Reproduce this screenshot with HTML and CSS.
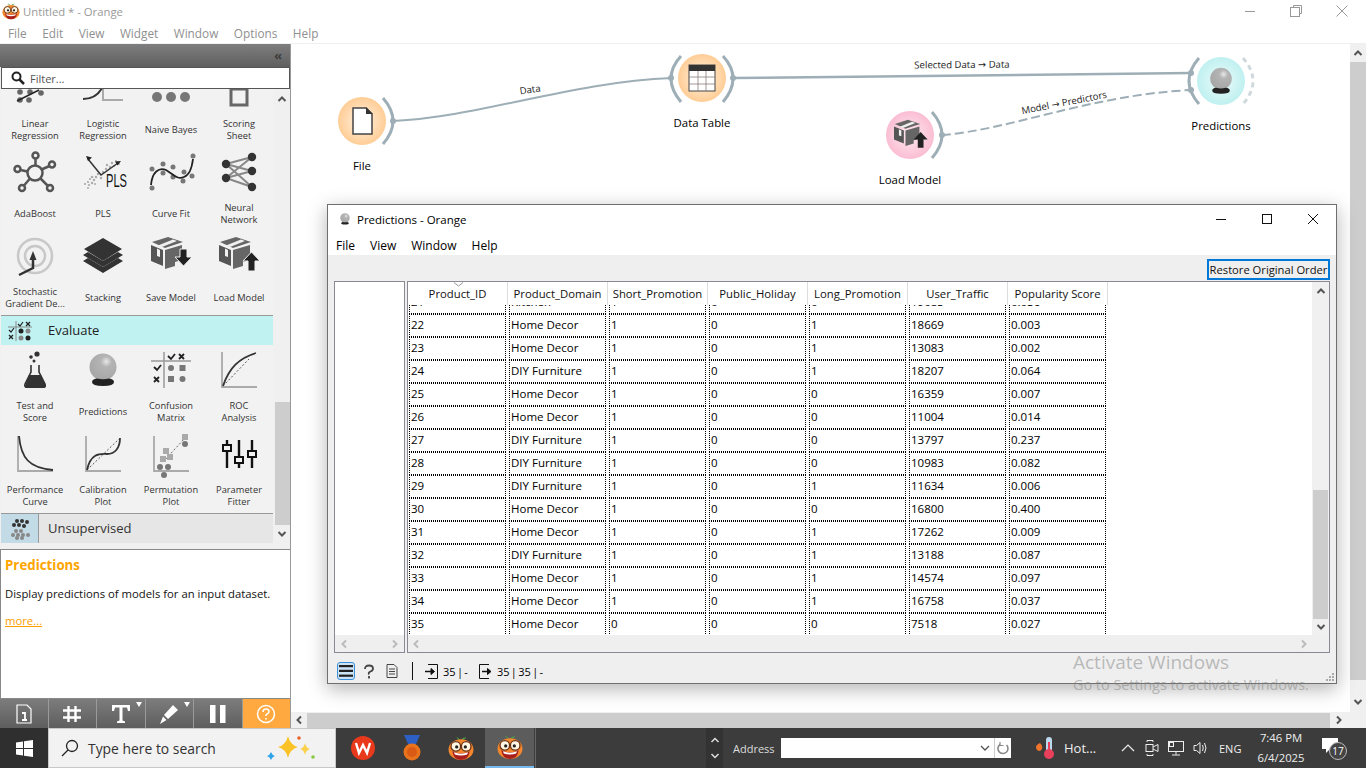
FILE: index.html
```html
<!DOCTYPE html>
<html lang="en">
<head>
<meta charset="utf-8">
<title>Untitled * - Orange</title>
<link rel="stylesheet" href="styles.css">
</head>
<body>
<svg class="defs" width="0" height="0" aria-hidden="true">
  <defs>
    <radialGradient id="gOrange"><stop offset="0" stop-color="#fff3e2"/><stop offset="1" stop-color="#ffcd96"/></radialGradient>
    <radialGradient id="gPink"><stop offset="0" stop-color="#fdeaf0"/><stop offset="1" stop-color="#fbbdd3"/></radialGradient>
    <radialGradient id="gCyan"><stop offset="0" stop-color="#eefbfb"/><stop offset="1" stop-color="#bff0f0"/></radialGradient>
    <radialGradient id="gBall" cx=".62" cy=".3" r=".8"><stop offset="0" stop-color="#e8e8e8"/><stop offset=".25" stop-color="#b4b4b4"/><stop offset="1" stop-color="#a4a4a4"/></radialGradient>
    <symbol id="chevU" viewBox="0 0 10 8"><path d="M1.5 6 5 2.5 8.5 6" fill="none" stroke="#555" stroke-width="2"/></symbol>
    <symbol id="chevD" viewBox="0 0 10 8"><path d="M1.5 2 5 5.5 8.5 2" fill="none" stroke="#555" stroke-width="2"/></symbol>
    <symbol id="chevL" viewBox="0 0 8 10"><path d="M6 1.5 2.5 5 6 8.5" fill="none" stroke="#bbb" stroke-width="2"/></symbol>
    <symbol id="chevR" viewBox="0 0 8 10"><path d="M2 1.5 5.5 5 2 8.5" fill="none" stroke="#bbb" stroke-width="2"/></symbol>
    <symbol id="ball" viewBox="0 0 40 40">
      <circle cx="20" cy="17" r="13.5" fill="url(#gBall)"/>
      <path d="M9 32q0-3 5-3.500q6 1.500 12 0q5 .5 5 3.500q0 4-11 4t-11-4z" fill="#222"/>
    </symbol>
    <symbol id="pkg" viewBox="0 0 40 40">
      <path d="M0 9 12 14V30L0 25z" fill="#555"/>
      <path d="M14 14 31 9V24L24 26V30L14 33z" fill="#666"/>
      <path d="M1 6 17 1 32 6 14 12z" fill="#666"/>
      <path d="M7 9.500 22 3.500 26 5 11 11z" fill="#f0f0f0"/>
      <path d="M6 12.500 9 14V21L6 20z" fill="#f0f0f0"/>
    </symbol>
    <symbol id="mascot" viewBox="0 0 24 24">
      <path d="M11 5C10 2.500 9 2 7.500 2.500 9 3 10 4 10.500 5zM12 5c1-2 3-3 5-2.500-1 .5-3 1.500-4 2.800z" fill="#4aa84a"/>
      <ellipse cx="12" cy="13.500" rx="11.500" ry="9.500" fill="#f4872e"/>
      <path d="M4 15q8 4 16 0q-1 8-8 8t-8-8z" fill="#a81f1c"/>
      <path d="M5.500 16q6.500 2.500 13 0l-.8 2q-5.700 2-11.400 0z" fill="#fff"/>
      <circle cx="7.200" cy="10.500" r="4.400" fill="#fff6e4" stroke="#6b3314" stroke-width="1.200"/>
      <circle cx="16.800" cy="10.500" r="4.400" fill="#fff6e4" stroke="#6b3314" stroke-width="1.200"/>
      <circle cx="8" cy="11" r="1.500" fill="#222"/><circle cx="16" cy="11" r="1.500" fill="#222"/>
    </symbol>
  </defs>
</svg>

<div class="app">
  <header class="titlebar">
    <svg class="title-logo" width="18" height="18"><use href="#mascot"/></svg>
    <span class="title-text">Untitled * - Orange</span>
    <div class="title-controls">
      <span class="wc"><svg width="12" height="12" viewBox="0 0 12 12"><path d="M1 6.500h10" stroke="#999"/></svg></span>
      <span class="wc"><svg width="12" height="12" viewBox="0 0 12 12" fill="none" stroke="#999"><path d="M3.500 2.500v-2h8v8h-2"/><rect x=".5" y="2.500" width="9" height="9"/></svg></span>
      <span class="wc"><svg width="12" height="12" viewBox="0 0 12 12"><path d="M.5.500l11 11m0-11l-11 11" stroke="#999"/></svg></span>
    </div>
  </header>
  <nav class="menubar">
    <span>File</span><span>Edit</span><span>View</span><span>Widget</span><span>Window</span><span>Options</span><span>Help</span>
  </nav>

  <main class="main">
    <aside class="sidebar">
      <div class="dock-head"><span class="dock-collapse">‹‹</span></div>
      <div class="filter">
        <svg width="14" height="14" viewBox="0 0 14 14" fill="none" stroke="#222" stroke-width="2"><circle cx="5.500" cy="5.500" r="4"/><path d="M8.500 8.500l4.500 4.500" stroke-width="2.500"/></svg>
        <span>Filter...</span>
      </div>
      <div class="toolbox">
        <div class="tool-list">
          <div class="tool-grid tool-grid-first">
            <div class="tool"><svg class="ti" viewBox="0 0 40 40"><g fill="#666"><circle cx="5" cy="32" r="2.800"/><circle cx="14" cy="32" r="2.800"/><circle cx="26" cy="25" r="2.800"/><circle cx="5" cy="24" r="2.800"/><circle cx="15" cy="24" r="2.800"/></g><path d="M2 33 24 22" stroke="#222" stroke-width="1.500"/></svg><span class="tl">Linear<br>Regression</span></div>
            <div class="tool"><svg class="ti" viewBox="0 0 40 40"><path d="M20 4V32H40" fill="none" stroke="#aaa" stroke-width="2"/><path d="M0 31Q13 31 19 20" fill="none" stroke="#333" stroke-width="2"/></svg><span class="tl">Logistic<br>Regression</span></div>
            <div class="tool"><svg class="ti" viewBox="0 0 40 40"><g fill="#777"><circle cx="6" cy="29" r="5"/><circle cx="20" cy="29" r="5"/><circle cx="34" cy="29" r="5"/></g></svg><span class="tl">Naive Bayes</span></div>
            <div class="tool"><svg class="ti" viewBox="0 0 40 40"><rect x="12" y="21" width="16" height="16" fill="none" stroke="#666" stroke-width="3"/></svg><span class="tl">Scoring<br>Sheet</span></div>

            <div class="tool"><svg class="ti" viewBox="0 0 40 40" fill="none" stroke="#555" stroke-width="2.500"><circle cx="20" cy="21" r="7.500"/><circle cx="20.500" cy="3.500" r="3"/><circle cx="2.500" cy="17" r="3"/><circle cx="38" cy="12.500" r="3" transform="translate(-1)"/><circle cx="7" cy="36" r="3"/><circle cx="35" cy="36" r="3"/><path d="M20.500 6.500v7M5.500 18l7 1.500M34.500 14l-8 3.500M9 33.500l6-7M32.500 33.500l-7-7"/></svg><span class="tl">AdaBoost</span></div>
            <div class="tool"><svg class="ti" viewBox="0 0 40 40"><g fill="#aaa"><circle cx="2" cy="32" r="1.100"/><circle cx="5" cy="30" r="1.100"/><circle cx="7" cy="27" r="1.100"/><circle cx="6" cy="33" r="1.100"/><circle cx="9" cy="31" r="1.200"/><circle cx="11" cy="28" r="1.200"/><circle cx="9" cy="25" r="1.200"/><circle cx="13" cy="25" r="1.200"/><circle cx="15" cy="22" r="1.200"/><circle cx="12" cy="32" r="1"/><circle cx="5" cy="36" r="1"/><circle cx="18" cy="26" r="1.200"/><circle cx="20" cy="20" r="1.200"/><circle cx="23" cy="17" r="1.200"/><circle cx="24" cy="13" r="1.200"/><circle cx="27" cy="15" r="1.200"/><circle cx="29" cy="11" r="1.200"/><circle cx="33" cy="9" r="1"/><circle cx="31" cy="14" r="1"/><circle cx="36" cy="12" r="1"/></g><path d="M5 7 18 23 35 11" fill="none" stroke="#333" stroke-width="1.500"/><path d="M3 4l6 1.500-4 3.500zM38 9l-6 .500 2.500 4z" fill="#222"/><text class="pls" x="23" y="35" textLength="21" lengthAdjust="spacingAndGlyphs">PLS</text></svg><span class="tl">PLS</span></div>
            <div class="tool"><svg class="ti" viewBox="0 0 40 40"><g fill="#777"><circle cx="1" cy="36" r="2.500"/><circle cx="1" cy="17" r="2.500"/><circle cx="12" cy="12" r="2.500"/><circle cx="12" cy="21" r="2.500"/><circle cx="22" cy="15" r="2.500"/><circle cx="22" cy="25" r="2.500"/><circle cx="32" cy="29" r="2.500"/><circle cx="33" cy="20" r="2.500"/><circle cx="41" cy="24" r="2.500"/><circle cx="42" cy="4" r="2.500"/></g><path d="M0 33C1 20 8 15 15 18 22 22 26 28 33 25 39 23 41 15 42 7" fill="none" stroke="#222" stroke-width="1.800"/></svg><span class="tl">Curve Fit</span></div>
            <div class="tool"><svg class="ti" viewBox="0 0 40 40"><path d="M7 12 33 5M7 12 33 19M7 12 33 35M7 26 33 5M7 26 33 19M7 26 33 35" stroke="#888" stroke-width="2"/><g fill="#333"><circle cx="7" cy="12" r="4.200"/><circle cx="7" cy="26" r="4.200"/><circle cx="33" cy="5" r="4.200"/><circle cx="33" cy="19" r="4.200"/><circle cx="33" cy="35" r="4.200"/></g></svg><span class="tl">Neural<br>Network</span></div>

            <div class="tool"><svg class="ti" viewBox="0 0 40 40"><circle cx="20" cy="20" r="17" fill="none" stroke="#c8c8c8" stroke-width="2.500"/><circle cx="20" cy="20" r="10" fill="none" stroke="#c8c8c8" stroke-width="2.500"/><path d="M4 39 18 32V24" fill="none" stroke="#333" stroke-width="2.500"/><path d="M18 15l-3.500 9h7z" fill="#333"/></svg><span class="tl">Stochastic<br>Gradient De...</span></div>
            <div class="tool"><svg class="ti" viewBox="0 0 40 40"><path d="M0 25 20 37 40 25 35 22 20 31 5 22z" fill="#333"/><path d="M0 19 20 31 40 19 35 16 20 25 5 16z" fill="#333"/><path d="M20 2 39 13 20 25 1 13z" fill="#333"/></svg><span class="tl">Stacking</span></div>
            <div class="tool"><svg class="ti" viewBox="0 0 40 40"><use href="#pkg" width="40" height="40"/><path d="M29 13h7v8h5l-8.500 9-8.500-9h5z" fill="#222" stroke="#f0f0f0"/></svg><span class="tl">Save Model</span></div>
            <div class="tool"><svg class="ti" viewBox="0 0 40 40"><use href="#pkg" width="40" height="40"/><path d="M29 35v-10h-5l8.500-9 8.500 9h-5v10z" fill="#222" stroke="#f0f0f0"/></svg><span class="tl">Load Model</span></div>
          </div>

          <div class="cat cat-open">
            <span class="cat-icon">
              <svg width="24" height="22" viewBox="0 0 24 22"><path d="M8 1V21M0 7H24" stroke="#888"/><path d="M10 4l2 2 3-4M1 10l2 2 3-4" fill="none" stroke="#222" stroke-width="1.200"/><path d="M18 2l4 4m0-4l-4 4M1 15l4 4m0-4l-4 4" stroke="#222" stroke-width="1.300"/><circle cx="13" cy="11" r="2.500" fill="#222"/><circle cx="20" cy="11" r="2.500" fill="#888"/><circle cx="13" cy="18" r="2.500" fill="#888"/><circle cx="20" cy="18" r="2.500" fill="#222"/></svg>
            </span>
            <span class="cat-name">Evaluate</span>
          </div>

          <div class="tool-grid">
            <div class="tool"><svg class="ti" viewBox="0 0 40 40"><circle cx="22" cy="4" r="2.600" fill="#333"/><circle cx="16" cy="7" r="1.800" fill="#333"/><circle cx="19" cy="11" r="1.500" fill="#333"/><path d="M16 15v7L10 34q-1 3 2 3H28q3 0 2-3L24 22V15" fill="none" stroke="#333" stroke-width="1.600"/><path d="M14 25H26L31 36q0 2-3 2H12q-3 0-2-2z" fill="#333"/></svg><span class="tl">Test and<br>Score</span></div>
            <div class="tool"><svg class="ti"><use href="#ball"/></svg><span class="tl">Predictions</span></div>
            <div class="tool"><svg class="ti" viewBox="0 0 40 40"><path d="M13 2V38M0 11H40" stroke="#999" stroke-width="1.500"/><path d="M17 6l3 3 4-5M3 17l3 3 4-5" fill="none" stroke="#222" stroke-width="1.800"/><path d="M28 4l5 5m0-5l-5 5M3 27l5 5m0-5l-5 5" stroke="#222" stroke-width="1.800"/><circle cx="20" cy="18" r="3" fill="#777"/><rect x="28.500" y="15" width="6" height="6" fill="#777"/><rect x="17" y="26" width="6" height="6" fill="#777"/><circle cx="31.500" cy="29" r="3" fill="#777"/></svg><span class="tl">Confusion<br>Matrix</span></div>
            <div class="tool"><svg class="ti" viewBox="0 0 40 40"><path d="M3 2V37H38" fill="none" stroke="#aaa" stroke-width="1.800"/><path d="M4 36 30 9" stroke="#555" stroke-dasharray="2 2"/><path d="M4 36C10 18 20 8 37 3" fill="none" stroke="#333" stroke-width="1.800"/></svg><span class="tl">ROC<br>Analysis</span></div>

            <div class="tool"><svg class="ti" viewBox="0 0 40 40"><path d="M3 2V37H38" fill="none" stroke="#aaa" stroke-width="1.800"/><path d="M4 2C6 24 14 34 38 36" fill="none" stroke="#333" stroke-width="1.800"/></svg><span class="tl">Performance<br>Curve</span></div>
            <div class="tool"><svg class="ti" viewBox="0 0 40 40"><path d="M3 2V37H38" fill="none" stroke="#aaa" stroke-width="1.800"/><path d="M4 36 36 5" stroke="#555" stroke-dasharray="2 2"/><path d="M4 36C8 18 18 20 24 20 32 20 37 14 37 4" fill="none" stroke="#333" stroke-width="1.800"/></svg><span class="tl">Calibration<br>Plot</span></div>
            <div class="tool"><svg class="ti" viewBox="0 0 40 40"><path d="M3 2V37H38" fill="none" stroke="#aaa" stroke-width="1.800"/><path d="M12 28 34 4" stroke="#666" stroke-dasharray="2 2"/><g fill="#aaa"><rect x="9" y="22" width="6" height="6"/><rect x="12" y="14" width="6" height="6"/><rect x="16" y="20" width="6" height="6"/><rect x="31" y="0" width="6" height="6"/></g><g fill="#777"><circle cx="9" cy="33" r="3"/><circle cx="17" cy="33" r="3"/><circle cx="13" cy="41" r="3"/><circle cx="34" cy="10" r="3"/></g></svg><span class="tl">Permutation<br>Plot</span></div>
            <div class="tool"><svg class="ti" viewBox="0 0 40 40" stroke="#111"><path d="M8 6V34M20 6V34M33 6V34" stroke-width="2.400"/><g fill="#f2f2f2" stroke-width="2"><rect x="4" y="11" width="8" height="6"/><rect x="16" y="23" width="8" height="6"/><rect x="29" y="17" width="8" height="6"/></g></svg><span class="tl">Parameter<br>Fitter</span></div>
          </div>

          <div class="cat cat-closed">
            <span class="cat-icon">
              <svg width="22" height="22" viewBox="0 0 22 22"><g fill="#333"><circle cx="8" cy="3" r="2"/><circle cx="13" cy="3" r="2"/><circle cx="18" cy="4" r="2"/><circle cx="5" cy="7" r="2"/><circle cx="10" cy="7" r="2"/><circle cx="15" cy="8" r="2"/></g><g fill="#888"><circle cx="7" cy="13" r="2"/><circle cx="12" cy="13" r="2"/><circle cx="4" cy="17" r="2"/><circle cx="9" cy="17" r="2"/><circle cx="14" cy="17" r="2"/><circle cx="19" cy="17" r="2"/><circle cx="8" cy="20" r="2"/><circle cx="13" cy="20" r="2"/></g></svg>
            </span>
            <span class="cat-name">Unsupervised</span>
          </div>
        </div>
        <div class="side-scroll">
          <svg class="chev chev-top" width="10" height="8"><use href="#chevU"/></svg>
          <div class="side-thumb"></div>
          <svg class="chev" width="10" height="8"><use href="#chevD"/></svg>
        </div>
      </div>

      <section class="info">
        <h2>Predictions</h2>
        <p>Display predictions of models for an input dataset.</p>
        <a href="#">more...</a>
      </section>

      <div class="dock-tools">
        <span class="dt"><svg width="18" height="20" viewBox="0 0 18 20" fill="none" stroke="#fff" stroke-width="1.200"><path d="M2 1H12L16 5V19H2z"/><path d="M9 6v.01" stroke-width="2.400"/><path d="M7 9H10V16M7 16H12" stroke-width="1.800"/></svg></span>
        <span class="dt"><svg width="20" height="18" viewBox="0 0 20 18" fill="none" stroke="#fff" stroke-width="2.400"><path d="M6.500 1V17M13.500 1V17M1 5.500H19M1 12.500H19"/></svg></span>
        <span class="dt dt-menu"><svg width="20" height="20" viewBox="0 0 20 20" fill="#fff"><path d="M1 1H19V7H17L16 3.500H11.500V16.500L14 17.500V19H6V17.500L8.500 16.500V3.500H4L3 7H1z"/></svg></span>
        <span class="dt dt-menu"><svg width="20" height="20" viewBox="0 0 20 20" fill="#fff"><path d="M13 1 18 6 8 15 4 11zM3 12.500 6.500 16 0 20z"/></svg></span>
        <span class="dt"><svg width="16" height="18" viewBox="0 0 16 18" fill="#fff"><rect x="0" y="0" width="5.500" height="18"/><rect x="10" y="0" width="5.500" height="18"/></svg></span>
        <span class="dt dt-help"><svg width="20" height="20" viewBox="0 0 20 20" fill="none" stroke="#fff" stroke-width="1.500"><circle cx="10" cy="10" r="8.500"/><path d="M7 8q0-3 3-3t3 2.500q0 1.500-2 2.500-1 .5-1 2"/><path d="M10 14v1.500"/></svg></span>
      </div>
    </aside>

    <section class="workspace">
      <div class="canvas-row">
        <div class="canvas">
          <svg class="flow" viewBox="291 44 1059 668" width="1059" height="668">
            <g fill="none" stroke="#9eaeb6">
              <path d="M393 121C480 117 570 82 672 78" stroke-width="2"/>
              <path d="M733 78 1191 73" stroke-width="2.500"/>
              <path d="M942 135C1010 130 1090 95 1191 90" stroke-width="2" stroke-dasharray="9 4"/>
              <path d="M383 98Q403 121 383 144" stroke-width="3"/>
              <path d="M681 56Q661 78 681 102" stroke-width="3"/>
              <path d="M723 56Q743 78 723 102" stroke-width="3"/>
              <path d="M932 112Q952 135 932 158" stroke-width="3"/>
              <path d="M1199 58Q1179 81 1199 104" stroke-width="3"/>
              <path d="M1243 58Q1263 81 1243 104" stroke="#cfd8dc" stroke-width="3" stroke-dasharray="5 4"/>
            </g>
            <g fill="#9eaeb6">
              <circle cx="393" cy="121" r="3"/><circle cx="671" cy="78" r="3"/><circle cx="733" cy="78" r="3"/>
              <circle cx="942" cy="135" r="3"/><circle cx="1191" cy="73" r="3"/><circle cx="1191" cy="90" r="3"/>
            </g>
            <circle cx="362" cy="121" r="24" fill="url(#gOrange)"/>
            <circle cx="702" cy="78" r="24" fill="url(#gOrange)"/>
            <circle cx="910" cy="135" r="24" fill="url(#gPink)"/>
            <circle cx="1221" cy="81" r="24" fill="url(#gCyan)"/>
            <path d="M353 108H366L372 114V134H353z" fill="#fff" stroke="#444" stroke-width="1.500"/>
            <path d="M366 107 373 114H366z" fill="#333"/>
            <g>
              <rect x="689" y="65" width="26" height="26" fill="#fff" stroke="#444" stroke-width="1"/>
              <rect x="689" y="65" width="26" height="6" fill="#333"/>
              <path d="M698 71V91M706 71V91M689 77H715M689 84H715" stroke="#8a7f7f" stroke-width=".8"/>
            </g>
            <g transform="translate(894 119) scale(.82)"><use href="#pkg" width="40" height="40"/><path d="M29 35v-10h-5l8.500-9 8.500 9h-5v10z" fill="#222"/></g>
            <use href="#ball" x="1205" y="65" width="32" height="32"/>
            <g class="link-label">
              <text x="530" y="93" transform="rotate(-9 530 89)">Data</text>
              <text x="962" y="68" transform="rotate(-.5 962 65)">Selected Data → Data</text>
              <text x="1064" y="106" transform="rotate(-11 1064 102)">Model → Predictors</text>
            </g>
            <g class="node-label">
              <text x="362" y="170">File</text>
              <text x="702" y="127">Data Table</text>
              <text x="910" y="184">Load Model</text>
              <text x="1221" y="130">Predictions</text>
            </g>
          </svg>
        </div>
        <div class="canvas-vscroll">
          <svg class="chev" width="10" height="8"><use href="#chevU"/></svg>
          <div class="canvas-vthumb"></div>
          <svg class="chev" width="10" height="8"><use href="#chevD"/></svg>
        </div>
      </div>
      <div class="canvas-hscroll">
        <span class="hs-end"><svg width="8" height="10"><path d="M6 1.500 2.500 5 6 8.500" fill="none" stroke="#555" stroke-width="2"/></svg></span>
        <div class="canvas-hthumb"></div>
        <span class="hs-end"><svg width="8" height="10"><path d="M2 1.500 5.500 5 2 8.500" fill="none" stroke="#555" stroke-width="2"/></svg></span>
      </div>

      <div class="window">
        <div class="win-title">
          <svg width="14" height="14" viewBox="0 0 40 40"><use href="#ball" width="40" height="40"/></svg>
          <span>Predictions - Orange</span>
          <div class="win-controls">
            <span class="wb"><svg width="12" height="12" viewBox="0 0 12 12"><path d="M1 6.500h10" stroke="#111"/></svg></span>
            <span class="wb"><svg width="12" height="12" viewBox="0 0 12 12"><rect x="1.500" y="1.500" width="9" height="9" fill="none" stroke="#111"/></svg></span>
            <span class="wb"><svg width="12" height="12" viewBox="0 0 12 12"><path d="M1 1l10 10m0-10L1 11" stroke="#111"/></svg></span>
          </div>
        </div>
        <div class="win-menu"><span>File</span><span>View</span><span>Window</span><span>Help</span></div>
        <div class="win-body">
          <div class="restore-row"><button class="restore">Restore Original Order</button></div>
          <div class="tables">
            <div class="frame frame-left">
              <div class="left-white"></div>
              <div class="hscroll hscroll-left">
                <svg width="8" height="10"><use href="#chevL"/></svg>
                <svg width="8" height="10"><use href="#chevR"/></svg>
              </div>
            </div>
            <div class="frame frame-main">
              <div class="frame-top">
                <div class="data">
                  <div class="thead">
                    <svg class="sort" width="11" height="5" viewBox="0 0 11 5"><path d="M1 .5 5.500 4 10 .5" fill="none" stroke="#999"/></svg>
                    <span>Product_ID</span><span>Product_Domain</span><span>Short_Promotion</span><span>Public_Holiday</span><span>Long_Promotion</span><span>User_Traffic</span><span>Popularity Score</span>
                  </div>
                  <div class="tbody">
                    <table>
                      <tr><td><div>21</div></td><td><div>Kitchen</div></td><td><div>1</div></td><td><div>0</div></td><td><div>0</div></td><td><div>19085</div></td><td><div>0.036</div></td></tr>
                      <tr><td><div>22</div></td><td><div>Home Decor</div></td><td><div>1</div></td><td><div>0</div></td><td><div>1</div></td><td><div>18669</div></td><td><div>0.003</div></td></tr>
                      <tr><td><div>23</div></td><td><div>Home Decor</div></td><td><div>1</div></td><td><div>0</div></td><td><div>1</div></td><td><div>13083</div></td><td><div>0.002</div></td></tr>
                      <tr><td><div>24</div></td><td><div>DIY Furniture</div></td><td><div>1</div></td><td><div>0</div></td><td><div>1</div></td><td><div>18207</div></td><td><div>0.064</div></td></tr>
                      <tr><td><div>25</div></td><td><div>Home Decor</div></td><td><div>1</div></td><td><div>0</div></td><td><div>0</div></td><td><div>16359</div></td><td><div>0.007</div></td></tr>
                      <tr><td><div>26</div></td><td><div>Home Decor</div></td><td><div>1</div></td><td><div>0</div></td><td><div>0</div></td><td><div>11004</div></td><td><div>0.014</div></td></tr>
                      <tr><td><div>27</div></td><td><div>DIY Furniture</div></td><td><div>1</div></td><td><div>0</div></td><td><div>0</div></td><td><div>13797</div></td><td><div>0.237</div></td></tr>
                      <tr><td><div>28</div></td><td><div>DIY Furniture</div></td><td><div>1</div></td><td><div>0</div></td><td><div>0</div></td><td><div>10983</div></td><td><div>0.082</div></td></tr>
                      <tr><td><div>29</div></td><td><div>DIY Furniture</div></td><td><div>1</div></td><td><div>0</div></td><td><div>1</div></td><td><div>11634</div></td><td><div>0.006</div></td></tr>
                      <tr><td><div>30</div></td><td><div>Home Decor</div></td><td><div>1</div></td><td><div>0</div></td><td><div>0</div></td><td><div>16800</div></td><td><div>0.400</div></td></tr>
                      <tr><td><div>31</div></td><td><div>Home Decor</div></td><td><div>1</div></td><td><div>0</div></td><td><div>1</div></td><td><div>17262</div></td><td><div>0.009</div></td></tr>
                      <tr><td><div>32</div></td><td><div>DIY Furniture</div></td><td><div>1</div></td><td><div>0</div></td><td><div>1</div></td><td><div>13188</div></td><td><div>0.087</div></td></tr>
                      <tr><td><div>33</div></td><td><div>Home Decor</div></td><td><div>1</div></td><td><div>0</div></td><td><div>1</div></td><td><div>14574</div></td><td><div>0.097</div></td></tr>
                      <tr><td><div>34</div></td><td><div>Home Decor</div></td><td><div>1</div></td><td><div>0</div></td><td><div>1</div></td><td><div>16758</div></td><td><div>0.037</div></td></tr>
                      <tr><td><div>35</div></td><td><div>Home Decor</div></td><td><div>0</div></td><td><div>0</div></td><td><div>0</div></td><td><div>7518</div></td><td><div>0.027</div></td></tr>
                    </table>
                  </div>
                </div>
                <div class="vscroll">
                  <svg class="chev" width="10" height="8"><use href="#chevU"/></svg>
                  <div class="vthumb"></div>
                  <svg class="chev" width="10" height="8"><use href="#chevD"/></svg>
                </div>
              </div>
              <div class="hscroll hscroll-main">
                <svg width="8" height="10"><use href="#chevL"/></svg>
                <svg width="8" height="10"><use href="#chevR"/></svg>
              </div>
            </div>
          </div>
          <div class="statusbar">
            <span class="sb-toggle"><svg width="14" height="12" viewBox="0 0 14 12" fill="#222"><rect width="14" height="2.200"/><rect y="4.800" width="14" height="2.200"/><rect y="9.600" width="14" height="2.200"/></svg></span>
            <svg class="sb-help" width="12" height="15" viewBox="0 0 12 15" fill="none" stroke="#444" stroke-width="1.800"><path d="M2 5q0-3.500 4-3.500t4 3q0 2-2.500 3T6 10.500"/><path d="M6 12v2.500"/></svg>
            <svg class="sb-doc" width="12" height="14" viewBox="0 0 12 14" fill="none" stroke="#444"><path d="M1 .5H8L11 3.500V13.500H1z"/><path d="M3 5H9M3 7.500H9M3 10H9"/></svg>
            <span class="sb-sep"></span>
            <svg class="sb-in" width="13" height="15" viewBox="0 0 13 15" fill="none" stroke="#111"><path d="M3 .5H12.500V14.500H3"/><path d="M0 7.500H7" stroke-width="1.500"/><path d="M6 4.500 9.500 7.500 6 10.500z" fill="#111"/></svg>
            <span class="sb-text">35 | -</span>
            <svg class="sb-out" width="13" height="15" viewBox="0 0 13 15" fill="none" stroke="#111"><path d="M10 .5H.5V14.500H10"/><path d="M3 7.500H9" stroke-width="1.500"/><path d="M8.500 4.500 12 7.500 8.500 10.500z" fill="#111"/></svg>
            <span class="sb-text">35 | 35 | -</span>
            <svg class="grip" width="8" height="8" viewBox="0 0 8 8" fill="#aaa"><rect x="6" y="0" width="2" height="2"/><rect x="3" y="3" width="2" height="2"/><rect x="6" y="3" width="2" height="2"/><rect x="0" y="6" width="2" height="2"/><rect x="3" y="6" width="2" height="2"/><rect x="6" y="6" width="2" height="2"/></svg>
          </div>
        </div>
      </div>

      <div class="activate">
        <div class="activate-a">Activate Windows</div>
        <div class="activate-b">Go to Settings to activate Windows.</div>
      </div>
    </section>
  </main>

  <footer class="taskbar">
    <span class="start"><svg width="17" height="17" viewBox="0 0 17 17" fill="#fff"><path d="M0 2.400 7 1.400V8H0zM8 1.300 17 0V8H8zM0 9H7V15.600L0 14.600zM8 9H17V17L8 15.700z"/></svg></span>
    <div class="search">
      <svg width="18" height="18" viewBox="0 0 18 18" fill="none" stroke="#222" stroke-width="1.300"><circle cx="11" cy="7" r="5.500"/><path d="M7 11 1 17"/></svg>
      <span class="search-text">Type here to search</span>
      <svg class="sparkle" width="52" height="30" viewBox="0 0 52 30"><path d="M23 2q2 9 10 11-8 2-10 11-2-9-10-11 8-2 10-11z" fill="#fbc226"/><path d="M40 9q1 5 5 6-4 1-5 6-1-5-5-6 4-1 5-6z" fill="#fbd04a"/><path d="M6 18q1 3 4 4-3 1-4 4-1-3-4-4 3-1 4-4z" fill="#2ea3ea"/><circle cx="34" cy="4" r="1.800" fill="#e8622a"/><circle cx="48" cy="23" r="1.800" fill="#8cc63f"/></svg>
    </div>
    <span class="app-ic"><svg width="24" height="24" viewBox="0 0 24 24"><circle cx="12" cy="12" r="12" fill="#e8391c"/><path d="M5 7l3 10 4-8 4 8 3-10" fill="none" stroke="#fff" stroke-width="2.400"/></svg></span>
    <span class="app-ic"><svg width="22" height="28" viewBox="0 0 22 28"><path d="M3 1H19L15 10H7z" fill="#2e5fc4"/><circle cx="11" cy="18" r="8.500" fill="#e8731c"/><circle cx="11" cy="18" r="5" fill="#d95a14"/></svg></span>
    <span class="app-ic"><svg width="26" height="26"><use href="#mascot"/></svg></span>
    <span class="app-ic app-active"><svg width="26" height="26"><use href="#mascot"/></svg></span>
    <span class="tb-divider"></span>

    <div class="tray">
      <span class="addr-arrows">
        <svg width="10" height="8" viewBox="0 0 10 8"><path d="M1.500 6 5 2.500 8.500 6" fill="none" stroke="#ddd" stroke-width="1.500"/></svg>
        <svg width="10" height="8" viewBox="0 0 10 8"><path d="M1.500 2 5 5.500 8.500 2" fill="none" stroke="#ddd" stroke-width="1.500"/></svg>
      </span>
      <span class="addr-label">Address</span>
      <span class="addr-box">
        <svg width="10" height="8" viewBox="0 0 10 8"><path d="M1 2 5 6 9 2" fill="none" stroke="#555" stroke-width="1.300"/></svg>
        <span class="addr-refresh"><svg width="12" height="14" viewBox="0 0 12 14" fill="none" stroke="#888" stroke-width="1.600"><path d="M9.500 4A5 5 0 1 1 3 3.500"/><path d="M3 1V4.500H6.500" stroke-width="1.200"/></svg></span>
      </span>
      <span class="weather"><svg width="22" height="24" viewBox="0 0 22 24"><path d="M4 7q3 3 2 6-1 2-3 2-3-1-3-4 0-2 4-4z" fill="#f0742c"/><rect x="10" y="1" width="6" height="17" rx="3" fill="#bcd9ef"/><circle cx="13" cy="18" r="5" fill="#e8405a"/><rect x="12" y="6" width="2" height="10" fill="#e8405a"/></svg></span>
      <span class="weather-text">Hot...</span>
      <svg class="tr-up" width="14" height="8" viewBox="0 0 14 8"><path d="M1 7 7 1 13 7" fill="none" stroke="#eee" stroke-width="1.200"/></svg>
      <svg class="tr-cam" width="14" height="18" viewBox="0 0 14 18" fill="none" stroke="#eee"><path d="M2 3V1.500H8V3M2 15v1.500H8V15"/><rect x="1" y="5.500" width="7" height="7"/><path d="M8 8l5-2.500v7L8 10"/></svg>
      <svg class="tr-net" width="16" height="16" viewBox="0 0 16 16" fill="none" stroke="#eee"><rect x=".5" y="1.500" width="15" height="10"/><path d="M8 11.500v3M4 15H12"/><rect x="1.500" y="2.500" width="4" height="4" fill="#3d3d3d"/></svg>
      <svg class="tr-vol" width="16" height="16" viewBox="0 0 16 16" fill="none" stroke="#eee"><path d="M1 5.500H3.500L7 2.500V13.500L3.500 10.500H1z"/><path d="M9.500 5q1.500 3 0 6M11.500 3q3 5 0 10"/></svg>
      <span class="tr-lang">ENG</span>
      <span class="clock"><span>7:46 PM</span><span>6/4/2025</span></span>
      <span class="notif">
        <svg width="16" height="15" viewBox="0 0 16 15" fill="#fff"><path d="M0 0H16V11H8L4 15V11H0z"/></svg>
        <span class="notif-badge">17</span>
      </span>
    </div>
  </footer>
</div>
</body>
</html>
```
FILE: styles.css
```css
* { box-sizing: border-box; }
html, body { margin: 0; padding: 0; width: 1366px; height: 768px; overflow: hidden; background: #fff; }
body { font-family: "Open Sans", "DejaVu Sans", sans-serif; font-size: 11.500px; color: #000; }
.defs { position: absolute; }
.app { display: flex; flex-direction: column; width: 1366px; height: 768px; }

.titlebar { height: 22px; display: flex; align-items: center; padding: 0 1px 0 2px; flex: none; }
.title-logo { margin-right: 3px; }
.title-text { color: #999; font-size: 11.300px; }
.title-controls { margin-left: auto; display: flex; }
.wc { width: 46px; height: 22px; display: flex; align-items: center; justify-content: center; }
.menubar { height: 21px; display: flex; align-items: center; gap: 15.500px; padding-left: 8px; color: #8f8f8f; flex: none; font-size: 11.800px; }

.main { flex: 1; display: flex; min-height: 0; position: relative; border-top: 1px solid #f0f0f0; }

/* dock */
.sidebar { width: 291px; flex: none; display: flex; flex-direction: column; background: #f0f0f0; border-right: 1px solid #999; }
.dock-head { height: 23px; flex: none; background: linear-gradient(#7e7e7e, #5f5f5f); display: flex; justify-content: flex-end; align-items: center; padding-right: 9px; }
.dock-collapse { color: #3a3a3a; font-size: 12px; font-weight: 700; letter-spacing: -1px; }
.filter { height: 22px; flex: none; margin: 0 0 0 1px; background: #fff; border: 1px solid #555; display: flex; align-items: center; gap: 5px; padding-left: 9px; color: #555; font-size: 11px; }
.toolbox { height: 454px; flex: none; display: flex; }
.tool-list { width: 272px; margin: 0 1px; overflow: hidden; flex: none; background: #f2f2f2; }
.tool-grid { display: grid; grid-template-columns: repeat(4, 68px); grid-auto-rows: 84px; }
.tool-grid-first { margin-top: -26px; }
.tool { display: flex; flex-direction: column; align-items: center; padding-top: 5px; }
.ti { width: 40px; height: 40px; flex: none; margin-bottom: 10px; overflow: visible; }
.tl { height: 24px; display: flex; align-items: center; justify-content: center; text-align: center; font-size: 9.300px; line-height: 12px; color: #333; width: 67px; white-space: nowrap; }
.pls { font-family: "Liberation Sans", sans-serif; font-size: 18px; fill: #111; }
.cat { height: 30px; display: flex; align-items: stretch; border-top: 1px solid #999; }
.cat-icon { width: 38px; display: flex; align-items: center; justify-content: center; flex: none; }
.cat-name { font-size: 13px; line-height: 28px; padding-left: 9px; color: #222; }
.cat-open { background: #c1f2f2; }
.cat-closed { background: #e6e6e6; }
.cat-closed .cat-icon { background: #c3dbe7; border-right: 1px solid #999; }
.cat-closed .cat-name { color: #333; }
.side-scroll { width: 16px; display: flex; flex-direction: column; align-items: center; background: #f0f0f0; padding-top: 6px; }
.chev { flex: none; }
.side-thumb { width: 15px; height: 123px; background: #cdcdcd; margin-top: 299px; margin-bottom: 5px; flex: none; }

.info { height: 150px; flex: none; margin: 6px 0 0 0; background: #fff; border: 1px solid #888; border-right: 0; padding: 6px 4px; font-size: 11.300px; }
.info h2 { margin: 0; font-size: 13.300px; line-height: 18px; font-weight: 700; color: #ffa500; }
.info p { margin: 11px 0 10px; line-height: 18px; color: #111; white-space: nowrap; }
.info a { color: #ffa000; text-decoration: underline; }

.dock-tools { height: 29px; flex: none; display: flex; background: linear-gradient(#7c7c7c, #5e5e5e); }
.dt { width: 48.600px; display: flex; align-items: center; justify-content: center; border-right: 1px solid #9a9a9a; position: relative; }
.dt-menu::after { content: ""; position: absolute; right: 3px; top: 3px; border: 3px solid transparent; border-top: 5px solid #fff; border-bottom: 0; }
.dt-help { background: #ffa940; border-right: 0; flex: 1; }

/* workspace */
.workspace { flex: 1; position: relative; display: flex; flex-direction: column; min-width: 0; }
.canvas-row { flex: 1; display: flex; min-height: 0; }
.canvas { flex: 1; background: #fff; min-width: 0; overflow: hidden; }
.flow { display: block; }
.link-label text { font-size: 9.600px; text-anchor: middle; fill: #222; }
.node-label text { font-size: 11.400px; text-anchor: middle; fill: #000; }
.canvas-vscroll { width: 16px; flex: none; background: #f0f0f0; display: flex; flex-direction: column; align-items: center; padding: 5px 0 6px; }
.canvas-vthumb { width: 16px; flex: 1; background: #cdcdcd; margin: 5px 0 18px; }
.canvas-hscroll { height: 16px; flex: none; background: #f0f0f0; display: flex; align-items: center; }
.hs-end { width: 16px; display: flex; align-items: center; justify-content: center; flex: none; }
.canvas-hthumb { width: 1023px; height: 15px; background: #cdcdcd; flex: none; margin-right: 1px; }

/* sub window */
.window { position: absolute; left: 36px; top: 160px; width: 1010px; height: 480px; background: #efefef; border: 1px solid #6f6f6f; box-shadow: 0 5px 18px rgba(0,0,0,.3); display: flex; flex-direction: column; }
.win-title { height: 28px; flex: none; background: #fff; display: flex; align-items: center; padding-left: 10px; gap: 5px; }
.win-controls { margin-left: auto; display: flex; }
.wb { width: 46px; height: 28px; display: flex; align-items: center; justify-content: center; }
.win-menu { height: 22px; flex: none; background: #fff; display: flex; align-items: center; gap: 15px; padding: 2px 0 0 8px; font-size: 12px; }
.win-body { flex: 1; display: flex; flex-direction: column; min-height: 0; padding: 0 6px 0 6px; }
.restore-row { height: 26px; flex: none; display: flex; justify-content: flex-end; align-items: flex-start; padding-top: 4px; }
.restore { width: 123px; height: 21px; border: 2px solid #0078d7; background: #efefef; font: inherit; font-size: 11.200px; padding: 0; color: #111; white-space: nowrap; }
.tables { display: flex; gap: 2px; height: 372px; flex: none; }
.frame { border: 1px solid #8a8a94; display: flex; flex-direction: column; background: #fff; }
.frame-left { width: 71px; flex: none; }
.left-white { flex: 1; }
.frame-main { flex: 1; min-width: 0; }
.hscroll { height: 17px; flex: none; background: #efefef; display: flex; align-items: center; justify-content: space-between; }
.hscroll-left { padding: 0 5px; }
.hscroll-main { padding: 0 21px 0 4px; }
.frame-top { flex: 1; display: flex; min-height: 0; }
.data { flex: 1; min-width: 0; display: flex; flex-direction: column; }
.thead { height: 23px; flex: none; display: flex; position: relative; }
.thead span { width: 100px; flex: none; border-right: 1px solid #dcdcdc; text-align: center; line-height: 23px; white-space: nowrap; color: #111; font-size: 11.300px; }
.sort { position: absolute; left: 45px; top: 0; }
.tbody { flex: 1; overflow: hidden; min-height: 0; }
.tbody table { border-collapse: collapse; table-layout: fixed; width: 700px; margin-top: -14px; }
.tbody td { width: 100px; padding: 0 2px 0 1px; height: 23px; }
.tbody td div { height: 23px; border: 1px dotted #000; line-height: 20px; padding-left: 1px; white-space: nowrap; overflow: hidden; }
.vscroll { width: 17px; flex: none; background: #f0f0f0; display: flex; flex-direction: column; align-items: center; padding-top: 5px; }
.vthumb { width: 15px; height: 129px; background: #cdcdcd; margin: 195px 1px 4px 0; flex: none; }

.statusbar { flex: 1; display: flex; align-items: center; padding: 6px 0 0 3px; position: relative; }
.sb-toggle { width: 18px; height: 18px; border: 1px solid #3a8fd8; border-radius: 3px; background: #cde4f7; display: flex; align-items: center; justify-content: center; }
.sb-help { margin-left: 8px; }
.sb-doc { margin-left: 11px; }
.sb-sep { width: 1px; height: 18px; background: #111; margin-left: 14px; }
.sb-in { margin-left: 12px; }
.sb-text { margin-left: 5px; word-spacing: -1.500px; font-size: 11px; }
.sb-out { margin-left: 11px; }
.grip { position: absolute; right: -4px; bottom: 2px; }

.activate { position: absolute; left: 782px; top: 605px; color: rgba(130,130,130,.5); pointer-events: none; }
.activate-a { font-size: 19px; line-height: 26px; }
.activate-b { font-size: 14.400px; line-height: 20px; }

/* taskbar */
.taskbar { height: 40px; flex: none; display: flex; align-items: stretch; background: #3c3c3c; color: #eee; }
.start { width: 48px; flex: none; background: #2f2f2f; display: flex; align-items: center; justify-content: center; }
.search { width: 288px; flex: none; background: #f2f2f2; border: 1px solid #c8c8c8; display: flex; align-items: center; padding-left: 12px; color: #333; position: relative; }
.search-text { font-size: 13.900px; margin-left: 9px; }
.sparkle { position: absolute; left: 216px; top: 5px; }
.app-ic { width: 49px; flex: none; display: flex; align-items: center; justify-content: center; }
.search + .app-ic { margin-left: 2px; }
.app-active { background: #5c5c5c; border-bottom: 2px solid #76b9ed; }
.tb-divider { width: 1px; background: #666; margin-left: 1px; }
.tray { margin-left: auto; display: flex; align-items: center; height: 40px; }
.addr-arrows { display: flex; flex-direction: column; gap: 8px; width: 17px; align-items: center; background: #333; height: 40px; justify-content: center; }
.addr-label { margin-left: 10px; width: 48px; color: #ddd; font-size: 11px; }
.addr-box { width: 230px; height: 20px; background: #fff; display: flex; align-items: center; justify-content: flex-end; }
.addr-refresh { width: 17px; height: 20px; border-left: 1px solid #ccc; margin-left: 4px; display: flex; align-items: center; justify-content: center; }
.weather { margin-left: 25px; width: 25px; display: flex; }
.weather-text { margin-left: 3px; width: 34px; font-size: 13px; }
.tr-up { margin-left: 23px; }
.tr-cam { margin-left: 10px; }
.tr-net { margin-left: 9px; }
.tr-vol { margin-left: 9px; }
.tr-lang { margin-left: 10px; width: 26px; font-size: 11px; }
.clock { margin-left: 3px; width: 66px; display: flex; flex-direction: column; align-items: center; line-height: 20px; font-size: 11.300px; }
.notif { width: 36px; margin-left: 8px; margin-right: 8px; position: relative; display: flex; height: 24px; align-items: flex-start; padding-top: 2px; }
.notif-badge { position: absolute; left: 7px; top: 6px; width: 18px; height: 18px; border-radius: 50%; background: #444; border: 1px solid #bbb; font-size: 10px; line-height: 16px; text-align: center; color: #fff; }
```
